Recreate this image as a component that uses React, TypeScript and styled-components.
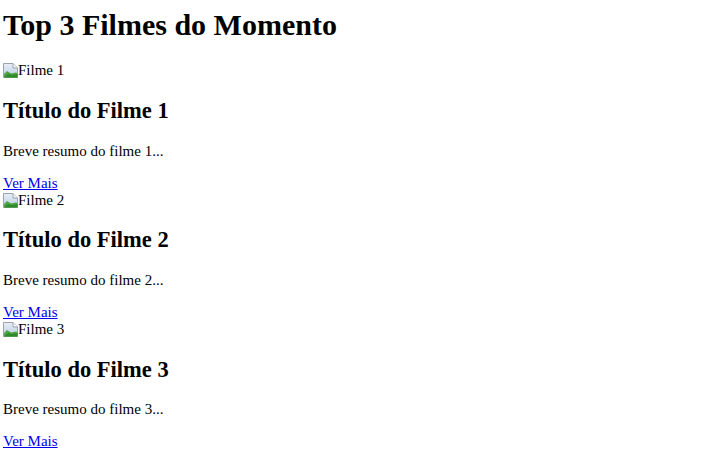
import React from "react";
import styled, { createGlobalStyle } from "styled-components";

const Global = createGlobalStyle`
  html, body { margin: 0; padding: 0; background: #fff; }
  body { font-family: "Liberation Serif", "Times New Roman", serif; font-size: 15px; color: #000; }
`;

const Page = styled.div`
  padding: 0 3px;
  margin-top: -12px;
`;

const Title = styled.h1`
  font-size: 30px;
  font-weight: bold;
  margin: 20.1px 0;
`;

const Card = styled.div``;

const Poster = styled.span`
  display: inline;
`;

const BrokenIcon = styled.svg`
  width: 15px;
  height: 15px;
  vertical-align: -3px;
`;

const CardTitle = styled.h2`
  font-size: 22.5px;
  font-weight: bold;
  margin: 18.675px 0;
`;

const Summary = styled.p`
  margin: 15px 0;
`;

const More = styled.a`
  color: #0000ee;
  text-decoration: underline;
`;

const Broken = () => (
  <BrokenIcon viewBox="0 0 15 15">
    <defs>
      <linearGradient id="sky" x1="0" y1="0" x2="0" y2="1">
        <stop offset="0" stopColor="#e8eef6" />
        <stop offset="1" stopColor="#b9cde4" />
      </linearGradient>
    </defs>
    <path d="M0.5 0.5h9.5l4.5 4.5v9.5h-14z" fill="url(#sky)" stroke="#9aa4ae" />
    <path d="M10 0.5v4.5h4.5" fill="#f6f6f6" stroke="#9aa4ae" />
    <path d="M1 14.5v-3.5l3-3 4 2.5 5 -1 1.5 1v4z" fill="#4ea544" />
    <path d="M1 14.5l4-3.5 4 1 5.5-1v3.5z" fill="#2f8a2c" />
  </BrokenIcon>
);

const films = [1, 2, 3];

export default function App() {
  return (
    <>
      <Global />
      <Page>
        <Title>Top 3 Filmes do Momento</Title>
        {films.map((n) => (
          <Card key={n}>
            <Poster>
              <Broken />
              Filme {n}
            </Poster>
            <CardTitle>Título do Filme {n}</CardTitle>
            <Summary>Breve resumo do filme {n}...</Summary>
            <More href="#">Ver Mais</More>
          </Card>
        ))}
      </Page>
    </>
  );
}
